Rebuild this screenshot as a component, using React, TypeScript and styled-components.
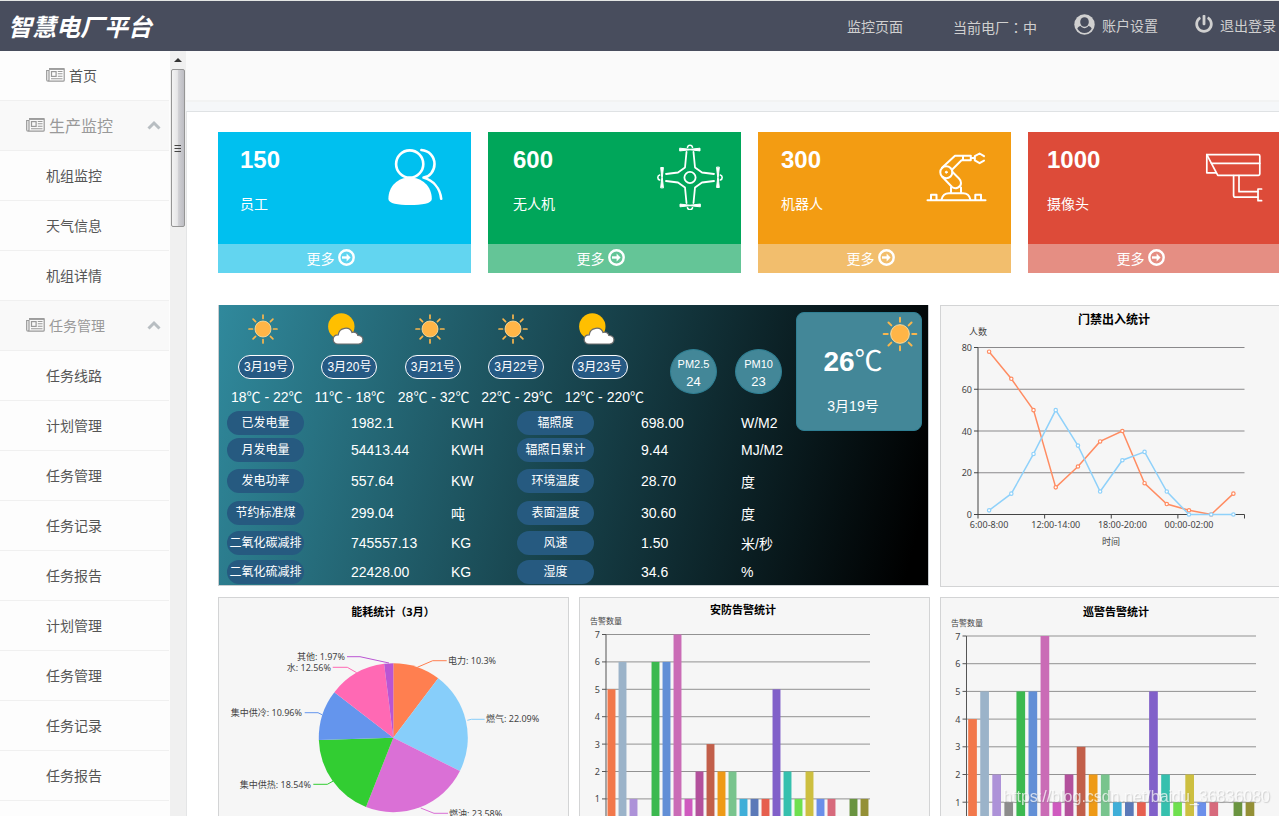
import React from "react";
import styled, { createGlobalStyle } from "styled-components";
import { FaPowerOff } from "react-icons/fa";

const GlobalStyle = createGlobalStyle`
  *, *::before, *::after { box-sizing: border-box; }
  body {
    margin: 0;
    overflow: hidden;
    background: #fff;
    font-family: "Liberation Sans", "Noto Sans CJK SC", sans-serif;
    font-size: 14px;
  }
  a { color: inherit; text-decoration: none; }
  ul { list-style: none; margin: 0; padding: 0; }
`;

/* ---------- shell ---------- */

const Shell = styled.div`
  display: flex;
  flex-direction: column;
  height: 100vh;
`;

const TopBar = styled.header`
  display: flex;
  align-items: center;
  justify-content: space-between;
  flex: none;
  height: 51px;
  padding: 0 3px 0 8px;
  border-top: 1px solid #e4e6e4;
  background: #484d5d;
  color: #d0d0d0;
`;

const Logo = styled.h1`
  margin: 0;
  padding-top: 4px;
  color: #fff;
  font-size: 24px;
  line-height: 32px;
  font-style: italic;
  font-weight: bold;
`;

const TopNav = styled.nav`
  display: flex;
  align-items: center;
  gap: 37px;
`;

const TopText = styled.a`
  line-height: 20px;
  padding-top: 2px;
`;

const TopTexts = styled.div`
  display: flex;
  gap: 50px;
`;

const TopAction = styled.a`
  display: flex;
  align-items: center;
  gap: 7px;
  line-height: 20px;

  svg { margin-bottom: 4px; }
`;

const Centered = styled.span`
  font-family: "Noto Sans CJK TC", sans-serif;
`;

const Body = styled.div`
  display: flex;
  flex: 1;
  min-height: 0;
`;

/* ---------- sidebar ---------- */

const Sidebar = styled.nav`
  flex: none;
  width: 170px;
  overflow: hidden;
  background: #fdfdfd;
`;

const MenuRow = styled.li<{ $group?: boolean }>`
  height: 50px;
  margin-right: 1px;
  border-bottom: 1px solid #f0f0f0;
  background: ${(p) => (p.$group ? "#f9f9f9" : "#fdfdfd")};
`;

const MenuLink = styled.a<{ $indent: number; $size?: number; $muted?: boolean }>`
  display: flex;
  align-items: center;
  gap: 4px;
  height: 48px;
  padding: 0 8px 0 ${(p) => p.$indent}px;
  color: ${(p) => (p.$muted ? "#999" : "#555")};
  font-size: ${(p) => p.$size ?? 14}px;

  svg:last-child { margin-left: auto; }
`;

const ScrollTrack = styled.div`
  display: flex;
  flex-direction: column;
  align-items: center;
  flex: none;
  width: 16px;
  background: #f0f0f0;
`;

const ScrollArrow = styled.svg`
  width: 8px;
  height: 18px;
`;

const ScrollThumb = styled.div`
  display: flex;
  align-items: center;
  justify-content: center;
  width: 14px;
  height: 158px;
  border: 1px solid #959595;
  border-radius: 2px;
  background: linear-gradient(to right, #f3f3f3 0%, #e6e6e8 45%, #cfcfd3 55%, #bdbdc3 100%);
`;

/* ---------- content ---------- */

const Main = styled.main`
  display: flex;
  flex-direction: column;
  flex: 1;
  min-width: 0;
  overflow: hidden;
`;

const Crumbs = styled.div`
  flex: none;
  height: 60px;
  border-bottom: 9px solid #f5f7f9;
  background: linear-gradient(#fafafa 49px, #f2f3f3 49px);
`;

const Content = styled.div`
  flex: 1;
  padding: 20px 0 0 31px;
  border-top: 1px solid #dfe2e4;
  border-left: 1px solid #e4e5e6;
  background: #fff;
`;

const Cards = styled.section`
  display: grid;
  grid-template-columns: repeat(4, minmax(253px, 1fr));
  gap: 17px;
`;

const Card = styled.article<{ $color: string }>`
  background: ${(p) => p.$color};
  color: #fff;
`;

const CardBody = styled.div<{ $inset: number }>`
  display: flex;
  justify-content: space-between;
  height: 112px;
  padding: 14px 13px 0 ${(p) => p.$inset}px;
`;

const CardCount = styled.strong`
  display: block;
  font-size: 24px;
  line-height: 28px;
`;

const CardLabel = styled.span`
  display: block;
  margin-top: 20px;
  line-height: 20px;
`;

const CardArt = styled.svg`
  width: 72px;
  height: 66px;
  margin-top: -2px;
  fill: none;
  stroke: #fff;
  stroke-linecap: round;
  stroke-linejoin: round;
`;

const CardMore = styled.a<{ $tint: string }>`
  display: flex;
  align-items: center;
  justify-content: center;
  gap: 3px;
  height: 29px;
  padding: 0 28px 2px 0;
  background: ${(p) => p.$tint};
`;

const Panels = styled.section`
  display: grid;
  grid-template-columns: repeat(3, minmax(351px, 1fr));
  gap: 10px;
  margin-top: 32px;
`;

const Panel = styled.figure`
  min-height: 282px;
  margin: 0;
  border: 1px solid #d3d4d5;
  background: #f6f6f6;
`;

const ChartSvg = styled.svg`
  display: block;
  width: 100%;
  height: auto;
  font-family: "Noto Sans", "Noto Sans CJK SC", sans-serif;
  font-size: 9px;
  fill: #444;

  text { dominant-baseline: central; }
`;

const ChartTitle = styled.text<{ $size?: number }>`
  font-size: ${(p) => p.$size ?? 11}px;
  font-weight: bold;
  text-anchor: middle;
  fill: #000;
`;

/* ---------- weather ---------- */

const Weather = styled.section`
  display: flex;
  justify-content: space-between;
  align-items: flex-start;
  grid-column: span 2;
  height: 281px;
  margin-right: 1px;
  border: solid #c9cdd0;
  border-width: 0 1px 1px;
  background: linear-gradient(104deg, #30899c 0%, #000 97%);
  color: #fff;
`;

const WeatherLeft = styled.div`
  padding-left: 8px;
`;

const WeatherTop = styled.div`
  display: flex;
  height: 104px;
  padding: 7px 0 0 4px;
`;

const Forecast = styled.ul`
  display: flex;
  flex: none;
  width: 417px;
`;

const Day = styled.li`
  flex: 1 1 0;
  min-width: 0;
  white-space: nowrap;

  svg { display: block; margin-left: 14px; }
`;

const DayPill = styled.span`
  display: block;
  width: 56px;
  margin: 9px 0 8px 7px;
  border: 1px solid #fff;
  border-radius: 12px;
  background: #265a84;
  font-size: 12px;
  line-height: 22px;
  text-align: center;
`;

const DayRange = styled.span`
  display: block;
  line-height: 20px;
`;

const AirList = styled.div`
  display: flex;
  gap: 18px;
  margin: 37px 0 0 22px;
`;

const Air = styled.div`
  width: 47px;
  height: 45px;
  padding-top: 6px;
  border: 1px solid #2f7f93;
  border-radius: 50%;
  background: #438798;
  font-size: 13px;
  line-height: 17px;
  text-align: center;
`;

const AirName = styled.span`
  display: block;
  font-size: 11px;
`;

const Readings = styled.table`
  border-collapse: collapse;
  table-layout: fixed;
  width: 562px;

  td, th { padding: 0; text-align: left; font-weight: normal; white-space: nowrap; }
`;

const ReadingRow = styled.tr<{ $height: number }>`
  height: ${(p) => p.$height}px;
`;

const ReadingName = styled.span`
  display: block;
  width: 77px;
  border-radius: 12px;
  background: #265a80;
  font-size: 12px;
  line-height: 24px;
  text-align: center;
`;

const Today = styled.div`
  position: relative;
  flex: none;
  width: 126px;
  height: 119px;
  margin: 7px 6px 0 0;
  padding: 33px 12px 0 0;
  border: 1px solid #2f7f93;
  border-radius: 8px;
  background: #438798;
  text-align: center;

  svg { position: absolute; top: 0; right: 0; }
`;

const TodayTemp = styled.div`
  font-size: 28px;
  line-height: 32px;
`;

const TodayDate = styled.div`
  margin-top: 18px;
  line-height: 20px;
`;

const Watermark = styled.div`
  position: fixed;
  right: 9px;
  bottom: 9px;
  color: rgba(255, 255, 255, 0.7);
  font-size: 16px;
  line-height: 20px;
  text-shadow: 1px 1px 1px rgba(120, 120, 120, 0.3);
`;

/* ---------- data ---------- */

type MenuEntry = { text: string; kind?: "home" | "group"; size?: number };

const menu: MenuEntry[] = [
  { text: "首页", kind: "home" },
  { text: "生产监控", kind: "group", size: 16 },
  { text: "机组监控" },
  { text: "天气信息" },
  { text: "机组详情" },
  { text: "任务管理", kind: "group" },
  { text: "任务线路" },
  { text: "计划管理" },
  { text: "任务管理" },
  { text: "任务记录" },
  { text: "任务报告" },
  { text: "计划管理" },
  { text: "任务管理" },
  { text: "任务记录" },
  { text: "任务报告" },
];

const days = [
  { date: "3月19号", range: "18℃ - 22℃", cloudy: false },
  { date: "3月20号", range: "11℃ - 18℃", cloudy: true },
  { date: "3月21号", range: "28℃ - 32℃", cloudy: false },
  { date: "3月22号", range: "22℃ - 29℃", cloudy: false },
  { date: "3月23号", range: "12℃ - 220℃", cloudy: true },
];

const readings = [
  { height: 27, cells: ["已发电量", "1982.1", "KWH", "辐照度", "698.00", "W/M2"] },
  { height: 27, cells: ["月发电量", "54413.44", "KWH", "辐照日累计", "9.44", "MJ/M2"] },
  { height: 35, cells: ["发电功率", "557.64", "KW", "环境温度", "28.70", "度"] },
  { height: 29, cells: ["节约标准煤", "299.04", "吨", "表面温度", "30.60", "度"] },
  { height: 31, cells: ["二氧化碳减排", "745557.13", "KG", "风速", "1.50", "米/秒"] },
  { height: 27, cells: ["二氧化硫减排", "22428.00", "KG", "湿度", "34.6", "%"] },
];

const entryOut = [78, 65, 50, 13, 23, 35, 40, 15, 5, 2, 0, 10];
const entryIn = [2, 10, 29, 50, 33, 11, 26, 30, 11, 0, 0, 0];

const barColors = [
  "#f2784b", "#9bb3c9", "#ad92d8", "#8c8c8c", "#3cb950", "#628fd6", "#ca6cb6", "#cf5abf",
  "#b3519c", "#c25f4a", "#ee9a17", "#78c48d", "#3faed8", "#5b79b8", "#e65f4f", "#8160c9",
  "#36c0ae", "#6fe04f", "#cdbf40", "#6b8fea", "#d76a7c", "#999999", "#6a9440", "#949036",
];
const securityAlarms = [5, 6, 1, 0, 6, 6, 7, 1, 2, 3, 2, 2, 1, 1, 1, 5, 2, 1, 2, 1, 1, 0, 1, 1];
const patrolAlarms = [4, 5, 2, 1, 5, 5, 7, 1, 2, 3, 2, 2, 1, 1, 1, 5, 2, 1, 2, 1, 1, 0, 1, 1];

const energy = [
  { label: "电力: 10.3%", value: 10.3, color: "#ff7f50", line: "198.3,69.3 213.7,62.7 227.7,62.7", x: 229, y: 62 },
  { label: "燃气: 22.09%", value: 22.09, color: "#87cefa", line: "248.3,122.3 252.3,121.3 265.7,121.3", x: 267, y: 120 },
  { label: "燃油: 23.58%", value: 23.58, color: "#da70d6", line: "201.7,210 215,215.3 229,215.3", x: 230, y: 215 },
  { label: "集中供热: 18.54%", value: 18.54, color: "#32cd32", line: "114.3,183 108.3,186.3 94.3,186.3", x: 92, y: 186 },
  { label: "集中供冷: 10.96%", value: 10.96, color: "#6495ed", line: "103,116.7 99,114.7 85.7,114.7", x: 83, y: 114 },
  { label: "水: 12.56%", value: 12.56, color: "#ff69b4", line: "137.7,74.7 128.3,69.3 113.7,69.3", x: 112, y: 69 },
  { label: "其他: 1.97%", value: 1.97, color: "#ba55d3", line: "170,65 141,58.7 128,58.7", x: 126, y: 58 },
];

/* ---------- drawings ---------- */

const Newspaper = () => (
  <svg width="19" height="14" viewBox="0 0 19 14" fill="none" stroke="#999" aria-hidden>
    <path d="M3 0.800 H18.200 V12.200 Q18.200 13.200 17 13.200 H2.200 Q0.700 13.200 0.700 11.800 V2.500 H3 V11.500 Q3 13.200 1.800 13.200" strokeWidth="1.200" />
    <path d="M3 1 H18" strokeWidth="1.600" />
    <rect x="5.500" y="3.600" width="4.600" height="4.800" strokeWidth="1.200" />
    <path d="M11.800 3.500 H16.500 M11.800 5.800 H16.500 M11.800 8.200 H16.500 M5 10.700 H16.500" strokeWidth="1.100" />
  </svg>
);

const UserCircle = () => (
  <svg width="21" height="21" viewBox="0 0 21 21" aria-hidden>
    <circle cx="10.500" cy="10.500" r="10.200" fill="#d0d0d0" />
    <ellipse cx="10.500" cy="8" rx="4.300" ry="4.800" fill="#484d5d" />
    <path d="M3.300 14.800 C4 12.800 5.300 12.200 6.600 12.100 C8.800 14.900 12.200 14.900 14.400 12.100 C15.700 12.200 17 12.800 17.700 14.800 C16 17.600 13.500 19 10.500 19 C7.500 19 5 17.600 3.300 14.800 Z" fill="#484d5d" />
  </svg>
);

const Chevron = () => (
  <svg width="14" height="10" viewBox="0 0 14 10" fill="none" stroke="#b8bec2" strokeWidth="3" aria-hidden>
    <path d="M1.500 8.500 L7 3 L12.500 8.500" />
  </svg>
);

const ArrowCircle = () => (
  <svg width="17" height="17" viewBox="0 0 17 17" fill="none" stroke="#fff" aria-hidden>
    <circle cx="8.500" cy="8.500" r="7.200" strokeWidth="2.400" />
    <path d="M4 8.500 H10" strokeWidth="2.400" />
    <path d="M8.600 4.600 L12.600 8.500 L8.600 12.400 Z" fill="#fff" stroke="none" />
  </svg>
);

const StaffArt = () => (
  <CardArt viewBox="0 0 72 66" strokeWidth="2.600" aria-hidden>
    <circle cx="23.700" cy="20" r="13.600" />
    <path d="M2.400 55 C2.400 42 12 33.500 23.700 33.500 C36 33.500 45.800 42 45.800 55 C45.800 59.500 36 61 23.700 61 C12 61 2.400 59.500 2.400 55 Z" fill="#fff" stroke="none" />
    <path d="M35.400 6 C43 6.500 48.500 12.500 48.500 20 C48.500 27 43.500 33 37.500 33.600 C47 36.500 54 44 55.200 54.800" />
  </CardArt>
);

const quarters = ["", "scale(-1 1)", "scale(1 -1)", "scale(-1 -1)"];
const sides = [0, 90, 180, 270];

const DroneArt = () => (
  <CardArt viewBox="0 0 72 66" strokeWidth="1.800" aria-hidden>
    <g transform="translate(34 33.500)">
      <circle r="5.600" />
      {quarters.map((t) => (
        <path key={t} transform={t} d="M-3.500 -25.500 L-5 -10 L-12 -5 L-24 -3.500" />
      ))}
      {sides.map((a) => (
        <g key={a} transform={`rotate(${a})`}>
          <path d="M-10 -29.300 L0 -28.200 L10 -29.300 V-26.600 L0 -27.700 L-10 -26.600 Z" fill="#fff" strokeWidth="1" />
          <path d="M-2.500 -30.300 A2.600 2.600 0 0 1 2.500 -30.300" strokeWidth="1.600" />
        </g>
      ))}
    </g>
  </CardArt>
);

const RobotArt = () => (
  <CardArt viewBox="0 0 72 66" strokeWidth="2" aria-hidden>
    <path d="M1.500 56.300 H59.500" />
    <path d="M5 56 V50.800 H10.500 V56 M49.300 56 V50.800 H55 V56" />
    <path d="M15.500 55.500 C16.500 51.500 19.500 49.300 23 49.300 H37 C40.500 49.300 43.500 51.500 44.300 55.500" />
    <path d="M25 43.500 V49 M35 43.500 V49" />
    <circle cx="20.300" cy="28.200" r="6" />
    <circle cx="20.300" cy="28.200" r="1" fill="#fff" strokeWidth="1" />
    <path d="M16.500 33 L26 43 C29 45.500 35 44 35 39 C35 36.500 34 35.500 33 34.500 L26.500 28" />
    <path d="M16 23.800 L29 11.800 H44.800 V16.200 H35.500 L26.500 25.200 M37 11.800 V16.200" />
    <path d="M45 14 H48.500" />
    <path d="M58 12.200 L53.600 9.500 L48.800 12.200 V16.400 L53.600 19.200 L58 16.600" />
  </CardArt>
);

const CameraArt = () => (
  <CardArt viewBox="0 0 72 66" strokeWidth="1.700" aria-hidden>
    <path d="M10.800 10.600 H62.500 Q63.800 10.600 63.800 12 V30 Q63.800 31.300 62.500 31.300 H21.800 Z" />
    <path d="M15.500 19.300 H63.800" />
    <path d="M10.800 10.600 V28.800 H20" />
    <path d="M37.600 31.500 V51.500 Q37.600 53.200 39.400 53.200 H61.800 M43 31.500 V47.700 H61.800" />
    <path d="M65.600 45 H62 V56.700 H65.600" />
  </CardArt>
);

const Sun = ({ size = 36 }: { size?: number }) => (
  <svg width={size} height={size === 36 ? 34 : size} viewBox="0 0 36 34" aria-hidden>
    <circle cx="18" cy="17" r="8" fill="#ffb547" stroke="#ffe0a3" strokeWidth="0.800" />
    {[0, 45, 90, 135, 180, 225, 270, 315].map((a) => (
      <path key={a} d="M18 6.500 V3" transform={`rotate(${a} 18 17)`} stroke="#f9b64d" strokeWidth="1.700" strokeLinecap="round" />
    ))}
  </svg>
);

const CloudSun = () => (
  <svg width="36" height="34" viewBox="0 0 36 34" aria-hidden>
    <circle cx="13.300" cy="14.500" r="13.200" fill="#ffbf00" />
    <path
      d="M10 32 C3.500 32 3.500 22.800 10.300 22.800 C11 15 22 14 24 20.500 C27 19.500 29.500 21 29.800 23.500 C36.500 23.500 36.500 32 30.500 32 Z"
      fill="#fff"
      stroke="#6d6d6d"
      strokeWidth="1.200"
    />
  </svg>
);

/* ---------- charts ---------- */

function LineChart() {
  const left = 37;
  const right = 303.5;
  const y = (v: number) => 208.5 - v * 2.0875;
  const slot = (right - left) / 12;
  const x = (i: number) => left + slot * (i + 0.5);
  const series = [
    { color: "#ff8c62", data: entryOut },
    { color: "#8fd1fa", data: entryIn },
  ];
  return (
    <ChartSvg viewBox="0 0 349 280" role="img" aria-label="门禁出入统计">
      <ChartTitle x="173" y="13" $size={12}>门禁出入统计</ChartTitle>
      <text x="28" y="25">人数</text>
      {[0, 20, 40, 60, 80].map((v) => (
        <g key={v}>
          <path d={`M${left} ${y(v)} H${right}`} stroke={v ? "#8a898b" : "#444"} strokeWidth="1" />
          <path d={`M${left - 4} ${y(v)} h4`} stroke="#444" />
          <text x="31" y={y(v)} textAnchor="end">{v}</text>
        </g>
      ))}
      <path d={`M${left} ${y(80)} V${y(0)}`} stroke="#444" />
      {[0, 3, 6, 9, 12].map((i) => (
        <path key={i} d={`M${left + slot * i} ${y(0)} v4`} stroke="#444" />
      ))}
      {["6:00-8:00", "12:00-14:00", "18:00-20:00", "00:00-02:00"].map((t, i) => (
        <text key={t} x={x(i * 3)} y="218" textAnchor="middle">{t}</text>
      ))}
      <text x="170" y="235" textAnchor="middle">时间</text>
      {series.map((s) => (
        <g key={s.color} fill="#fff" stroke={s.color}>
          <polyline fill="none" strokeWidth="1.500" points={s.data.map((v, i) => `${x(i)},${y(v)}`).join(" ")} />
          {s.data.map((v, i) => (
            <circle key={i} cx={x(i)} cy={y(v)} r="1.700" strokeWidth="1.200" />
          ))}
        </g>
      ))}
    </ChartSvg>
  );
}

function PieChart() {
  const cx = 174.3;
  const cy = 139.7;
  const r = 74.5;
  const at = (share: number) => {
    const a = (share / 100) * Math.PI * 2 - Math.PI / 2;
    return `${cx + r * Math.cos(a)} ${cy + r * Math.sin(a)}`;
  };
  let sum = 0;
  return (
    <ChartSvg viewBox="0 0 349 280" role="img" aria-label="能耗统计（3月）">
      <ChartTitle x="174" y="13">
        能耗统计<Centered as="tspan">（</Centered>3月<Centered as="tspan">）</Centered>
      </ChartTitle>
      {energy.map((e) => {
        const from = sum;
        sum += e.value;
        return (
          <g key={e.label}>
            <path d={`M${cx} ${cy} L${at(from)} A${r} ${r} 0 0 1 ${at(sum)} Z`} fill={e.color} />
            <polyline points={e.line} fill="none" stroke={e.color} />
            <text x={e.x} y={e.y} textAnchor={e.x > cx ? "start" : "end"}>{e.label}</text>
          </g>
        );
      })}
    </ChartSvg>
  );
}

type BarChartProps = {
  title: string;
  titleX: number;
  titleY: number;
  left: number;
  right: number;
  top: number;
  step: number;
  data: number[];
};

function BarChart({ title, titleX, titleY, left, right, top, step, data }: BarChartProps) {
  const slot = (right - left) / data.length;
  const y = (v: number) => top + (7 - v) * step;
  return (
    <ChartSvg viewBox="0 0 349 280" role="img" aria-label={title}>
      <ChartTitle x={titleX} y={titleY}>{title}</ChartTitle>
      <text x="10" y={titleY + 11} fontSize="8">告警数量</text>
      {[0, 1, 2, 3, 4, 5, 6, 7].map((v) => (
        <g key={v}>
          <path d={`M${left} ${y(v)} H${right}`} stroke="#929292" />
          <path d={`M${left - 4} ${y(v)} h4`} stroke="#555" />
          <text x={left - 6} y={y(v)} textAnchor="end">{v}</text>
        </g>
      ))}
      <path d={`M${left} ${y(7)} V${y(0)}`} stroke="#555" />
      {data.map((v, i) => (
        <rect key={i} x={left + slot * i + slot * 0.14} y={y(v)} width={slot * 0.72} height={v * step} fill={barColors[i]} />
      ))}
    </ChartSvg>
  );
}

/* ---------- page ---------- */

const cards = [
  { count: 150, label: "员工", color: "#00c0ef", tint: "#62d5f0", inset: 22, Art: StaffArt },
  { count: 600, label: "无人机", color: "#00a65a", tint: "#64c597", inset: 25, Art: DroneArt },
  { count: 300, label: "机器人", color: "#f39c12", tint: "#f2be6d", inset: 23, Art: RobotArt },
  { count: 1000, label: "摄像头", color: "#dd4b39", tint: "#e58e83", inset: 19, Art: CameraArt },
];

export default function App() {
  return (
    <Shell>
      <GlobalStyle />
      <TopBar>
        <Logo>智慧电厂平台</Logo>
        <TopNav>
          <TopTexts>
            <TopText href="#">监控页面</TopText>
            <TopText href="#">当前电厂<Centered>：</Centered>中</TopText>
          </TopTexts>
          <TopAction href="#"><UserCircle />账户设置</TopAction>
          <TopAction href="#"><FaPowerOff size={18} />退出登录</TopAction>
        </TopNav>
      </TopBar>
      <Body>
        <Sidebar>
          <ul>
            {menu.map((m, i) => (
              <MenuRow key={i} $group={m.kind === "group"}>
                <MenuLink
                  href="#"
                  $indent={m.kind === "group" ? 26 : 46}
                  $size={m.size}
                  $muted={m.kind === "group"}
                >
                  {m.kind && <Newspaper />}
                  <span>{m.text}</span>
                  {m.kind === "group" && <Chevron />}
                </MenuLink>
              </MenuRow>
            ))}
          </ul>
        </Sidebar>
        <ScrollTrack>
          <ScrollArrow viewBox="0 0 8 18"><path d="M4 7 L8 11 H0 Z" fill="#333" /></ScrollArrow>
          <ScrollThumb>
            <svg width="8" height="9" viewBox="0 0 8 9" stroke="#444" aria-hidden>
              <path d="M0.500 1.500 H7 M0.500 4.500 H7 M0.500 7.500 H7" />
            </svg>
          </ScrollThumb>
        </ScrollTrack>
        <Main>
          <Crumbs />
          <Content>
            <Cards>
              {cards.map(({ count, label, color, tint, inset, Art }) => (
                <Card key={label} $color={color}>
                  <CardBody $inset={inset}>
                    <div>
                      <CardCount>{count}</CardCount>
                      <CardLabel>{label}</CardLabel>
                    </div>
                    <Art />
                  </CardBody>
                  <CardMore href="#" $tint={tint}>更多<ArrowCircle /></CardMore>
                </Card>
              ))}
            </Cards>
            <Panels>
              <Weather>
                <WeatherLeft>
                  <WeatherTop>
                    <Forecast>
                      {days.map((d) => (
                        <Day key={d.date}>
                          {d.cloudy ? <CloudSun /> : <Sun />}
                          <DayPill>{d.date}</DayPill>
                          <DayRange>{d.range}</DayRange>
                        </Day>
                      ))}
                    </Forecast>
                    <AirList>
                      <Air><AirName>PM2.5</AirName>24</Air>
                      <Air><AirName>PM10</AirName>23</Air>
                    </AirList>
                  </WeatherTop>
                  <Readings>
                    <colgroup>
                      <col width="124" /><col width="100" /><col width="66" />
                      <col width="124" /><col width="100" /><col width="48" />
                    </colgroup>
                    <tbody>
                      {readings.map(({ height, cells }) => (
                        <ReadingRow key={cells[0]} $height={height}>
                          <th scope="row"><ReadingName>{cells[0]}</ReadingName></th>
                          <td>{cells[1]}</td>
                          <td>{cells[2]}</td>
                          <th scope="row"><ReadingName>{cells[3]}</ReadingName></th>
                          <td>{cells[4]}</td>
                          <td>{cells[5]}</td>
                        </ReadingRow>
                      ))}
                    </tbody>
                  </Readings>
                </WeatherLeft>
                <Today>
                  <Sun size={42} />
                  <TodayTemp><strong>26</strong>℃</TodayTemp>
                  <TodayDate>3月19号</TodayDate>
                </Today>
              </Weather>
              <Panel><LineChart /></Panel>
              <Panel><PieChart /></Panel>
              <Panel>
                <BarChart title="安防告警统计" titleX={163} titleY={11} left={26} right={290} top={36.5} step={27.4} data={securityAlarms} />
              </Panel>
              <Panel>
                <BarChart title="巡警告警统计" titleX={175} titleY={13} left={25.5} right={315} top={38} step={27.7} data={patrolAlarms} />
              </Panel>
            </Panels>
          </Content>
        </Main>
      </Body>
      <Watermark>https://blog.csdn.net/baidu_36836080</Watermark>
    </Shell>
  );
}
